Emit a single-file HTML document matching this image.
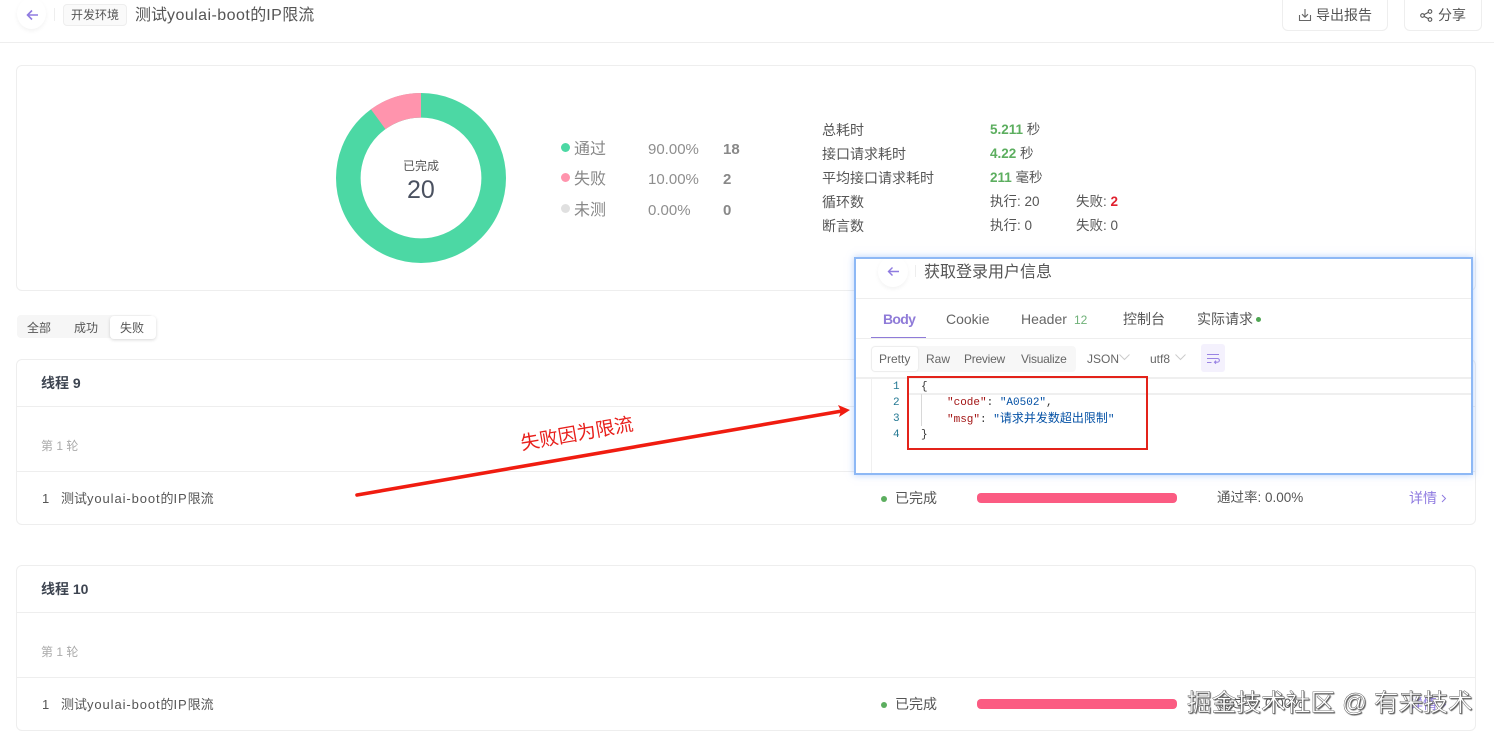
<!DOCTYPE html>
<html lang="zh"><head><meta charset="utf-8"><title>测试报告</title>
<style>
html,body{margin:0;padding:0;background:#fff}
body{position:relative;width:1494px;height:739px;overflow:hidden;font-family:"Liberation Sans","Noto Sans CJK SC",sans-serif;font-size:13px;color:#555}
.t{position:absolute;white-space:nowrap;line-height:20px}
.b{position:absolute;box-sizing:border-box}
.card{position:absolute;box-sizing:border-box;left:16px;width:1460px;background:#fff;border:1px solid #eeeeee;border-radius:6px}
.hl{position:absolute;height:1px;background:#eeeeee}
.m{font-family:"Liberation Mono","Noto Sans CJK SC",monospace;font-size:11px}
.m i{font-style:normal;font-size:12px}
.l{letter-spacing:.9px}
.l2{letter-spacing:.45px}
svg{position:absolute;overflow:visible}
</style></head><body>

<!-- header -->
<div class="b" style="left:17px;top:-2px;width:29px;height:31px;border-radius:50%;background:#fff;box-shadow:0 2px 4px rgba(0,0,0,.05)"></div>
<svg style="left:26px;top:9px" width="13" height="12" viewBox="0 0 13 12" fill="none" stroke="#8f7be0" stroke-width="1.6"><path d="M12 6H1.5M6 1.5L1.5 6L6 10.5"/></svg>
<div class="hl" style="left:54px;top:8px;width:1px;height:13px;background:#eee"></div>
<div class="b" style="left:63px;top:4px;width:64px;height:22px;border:1px solid #eee;border-radius:4px;background:#fafafa"></div>
<div class="t" style="left:71px;top:5px;font-size:12px;color:#555">开发环境</div>
<div class="t" style="left:135px;top:6px;font-size:16px;color:#555">测试<span class="l2">youlai-boot</span>的<span class="l2">IP</span>限流</div>
<div class="b" style="left:1282px;top:-6px;width:106px;height:37px;border:1px solid #eee;border-radius:6px"></div>
<svg style="left:1298px;top:8px" width="14" height="14" viewBox="0 0 14 14" fill="none" stroke="#666" stroke-width="1.1"><path d="M7 1V9M4 6.2L7 9.2L10 6.2M1.5 7V12.5H12.5V7"/></svg>
<div class="t" style="left:1316px;top:5px;font-size:14px;color:#555">导出报告</div>
<div class="b" style="left:1404px;top:-6px;width:78px;height:37px;border:1px solid #eee;border-radius:6px"></div>
<svg style="left:1420px;top:9px" width="13" height="13" viewBox="0 0 13 13" fill="none" stroke="#555" stroke-width="1.1"><circle cx="2.5" cy="6.5" r="1.8"/><circle cx="10" cy="2.5" r="1.8"/><circle cx="10" cy="10.5" r="1.8"/><path d="M4 5.6L8.4 3.4M4 7.4L8.4 9.6"/></svg>
<div class="t" style="left:1438px;top:5px;font-size:14px;color:#555">分享</div>
<div class="hl" style="left:0;top:42px;width:1494px"></div>

<!-- summary card -->
<div class="card" style="top:65px;height:226px"></div>
<svg style="left:336px;top:93px" width="170" height="170" viewBox="0 0 170 170">
<circle cx="85" cy="85" r="72.7" fill="none" stroke="#4cd8a4" stroke-width="24.6"/>
<path d="M85 0A85 85 0 0 0 34.9 16.3L49.5 36.2A60.4 60.4 0 0 1 85 24.6Z" fill="#ff94ad"/>
</svg>
<div class="t" style="left:403px;top:156px;font-size:12px;color:#555">已完成</div>
<div class="t" style="left:407px;top:179px;font-size:25px;line-height:22px;color:#4a5160">20</div>

<div class="b" style="left:561px;top:143px;width:9px;height:9px;border-radius:50%;background:#4cd8a4"></div>
<div class="t" style="left:574px;top:140px;font-size:16px;color:#888">通过</div>
<div class="t" style="left:648px;top:140px;font-size:15px;color:#8e8e8e">90.00%</div>
<div class="t" style="left:723px;top:140px;font-size:15px;font-weight:bold;color:#888">18</div>
<div class="b" style="left:561px;top:173px;width:9px;height:9px;border-radius:50%;background:#ff94ad"></div>
<div class="t" style="left:574px;top:170px;font-size:16px;color:#888">失败</div>
<div class="t" style="left:648px;top:170px;font-size:15px;color:#8e8e8e">10.00%</div>
<div class="t" style="left:723px;top:170px;font-size:15px;font-weight:bold;color:#888">2</div>
<div class="b" style="left:561px;top:204px;width:9px;height:9px;border-radius:50%;background:#e0e0e0"></div>
<div class="t" style="left:574px;top:201px;font-size:16px;color:#888">未测</div>
<div class="t" style="left:648px;top:201px;font-size:15px;color:#8e8e8e">0.00%</div>
<div class="t" style="left:723px;top:201px;font-size:15px;font-weight:bold;color:#888">0</div>

<div class="t" style="left:822px;top:120px;font-size:14px">总耗时</div>
<div class="t" style="left:990px;top:120px;font-size:13.5px"><b style="color:#5cae5f">5.211</b> 秒</div>
<div class="t" style="left:822px;top:144px;font-size:14px">接口请求耗时</div>
<div class="t" style="left:990px;top:144px;font-size:13.5px"><b style="color:#5cae5f">4.22</b> 秒</div>
<div class="t" style="left:822px;top:168px;font-size:14px">平均接口请求耗时</div>
<div class="t" style="left:990px;top:168px;font-size:13.5px"><b style="color:#5cae5f">211</b> 毫秒</div>
<div class="t" style="left:822px;top:192px;font-size:14px">循环数</div>
<div class="t" style="left:990px;top:192px;font-size:13.5px">执行: 20</div>
<div class="t" style="left:1076px;top:192px;font-size:13.5px">失败: <b style="color:#e0212f">2</b></div>
<div class="t" style="left:822px;top:216px;font-size:14px">断言数</div>
<div class="t" style="left:990px;top:216px;font-size:13.5px">执行: 0</div>
<div class="t" style="left:1076px;top:216px;font-size:13.5px">失败: 0</div>

<!-- filter tabs -->
<div class="b" style="left:17px;top:315px;width:136px;height:23px;background:#f6f6f6;border-radius:4px"></div>
<div class="b" style="left:110px;top:316px;width:46px;height:23px;background:#fff;border-radius:4px;box-shadow:0 1px 3px rgba(0,0,0,.16)"></div>
<div class="t" style="left:27px;top:318px;font-size:12px">全部</div>
<div class="t" style="left:74px;top:318px;font-size:12px">成功</div>
<div class="t" style="left:120px;top:318px;font-size:12px">失败</div>

<!-- thread 9 -->
<div class="card" style="top:359px;height:166px"></div>
<div class="t" style="left:41px;top:373px;font-size:14px;font-weight:bold;color:#3d4450">线程 9</div>
<div class="hl" style="left:17px;top:406px;width:1458px"></div>
<div class="t" style="left:41px;top:436px;font-size:12px;color:#aaa">第 1 轮</div>
<div class="hl" style="left:17px;top:471px;width:1458px"></div>
<div class="t" style="left:42px;top:489px">1</div>
<div class="t" style="left:61px;top:489px">测试<span class="l">youlai-boot</span>的<span class="l">IP</span>限流</div>
<div class="b" style="left:881px;top:496px;width:6px;height:6px;border-radius:50%;background:#5cae5f"></div>
<div class="t" style="left:895px;top:488px;font-size:14px">已完成</div>
<div class="b" style="left:977px;top:493px;width:200px;height:10px;border-radius:4px;background:#fb5b82"></div>
<div class="t" style="left:1217px;top:488px;font-size:13.5px">通过率: 0.00%</div>
<div class="t" style="left:1409px;top:488px;font-size:14px;color:#8f7be0">详情</div>
<svg style="left:1441px;top:494px" width="6" height="9" viewBox="0 0 6 9" fill="none" stroke="#8f7be0" stroke-width="1"><path d="M1 1L4.5 4.5L1 8"/></svg>

<!-- thread 10 -->
<div class="card" style="top:565px;height:166px"></div>
<div class="t" style="left:41px;top:579px;font-size:14px;font-weight:bold;color:#3d4450">线程 10</div>
<div class="hl" style="left:17px;top:612px;width:1458px"></div>
<div class="t" style="left:41px;top:642px;font-size:12px;color:#aaa">第 1 轮</div>
<div class="hl" style="left:17px;top:677px;width:1458px"></div>
<div class="t" style="left:42px;top:695px">1</div>
<div class="t" style="left:61px;top:695px">测试<span class="l">youlai-boot</span>的<span class="l">IP</span>限流</div>
<div class="b" style="left:881px;top:702px;width:6px;height:6px;border-radius:50%;background:#5cae5f"></div>
<div class="t" style="left:895px;top:694px;font-size:14px">已完成</div>
<div class="b" style="left:977px;top:699px;width:200px;height:10px;border-radius:4px;background:#fb5b82"></div>
<div class="t" style="left:1217px;top:694px;font-size:13.5px">通过率: 0.00%</div>
<div class="t" style="left:1409px;top:694px;font-size:14px;color:#8f7be0">详情</div>
<svg style="left:1441px;top:700px" width="6" height="9" viewBox="0 0 6 9" fill="none" stroke="#8f7be0" stroke-width="1"><path d="M1 1L4.5 4.5L1 8"/></svg>

<!-- arrow annotation -->
<svg style="left:340px;top:400px" width="520" height="110" viewBox="0 0 520 110">
<path d="M17 95L502 11" fill="none" stroke="#f01c10" stroke-width="3.6" stroke-linecap="round"/>
<path d="M510 10L498 5L501 11L499 17Z" fill="#f01c10"/>
</svg>
<div class="t" style="left:521px;top:434px;font-size:19px;color:#e8201c;transform:rotate(-10deg);transform-origin:left center;line-height:22px">失败因为限流</div>

<!-- overlay panel -->
<div class="b" style="left:854px;top:257px;width:619px;height:218px;background:#fff;border:2px solid #8db8f5;box-shadow:0 0 7px rgba(120,170,250,.55)"></div>
<div class="b" style="left:878px;top:256px;width:30px;height:31px;border-radius:50%;background:#fff;box-shadow:0 2px 4px rgba(0,0,0,.05);clip-path:inset(3px -6px -6px -6px)"></div>
<svg style="left:887px;top:266px" width="13" height="11" viewBox="0 0 13 11" fill="none" stroke="#8f7be0" stroke-width="1.4"><path d="M12 5.5H1.5M5.5 1.5L1.5 5.5L5.5 9.5"/></svg>
<div class="hl" style="left:915px;top:265px;width:1px;height:12px"></div>
<div class="t" style="left:924px;top:262px;font-size:16px;line-height:21px;color:#555">获取登录用户信息</div>
<div class="hl" style="left:856px;top:298px;width:615px"></div>

<div class="t" style="left:883px;top:309px;font-size:14px;font-weight:bold;letter-spacing:-.7px;color:#8f7bd8">Body</div>
<div class="b" style="left:871px;top:337px;width:55px;height:2px;background:#8f7bd8"></div>
<div class="t" style="left:946px;top:309px;font-size:14px;color:#666">Cookie</div>
<div class="t" style="left:1021px;top:309px;font-size:14px;color:#666">Header</div>
<div class="t" style="left:1074px;top:310px;font-size:12px;color:#6fb178">12</div>
<div class="t" style="left:1123px;top:309px;font-size:14px;color:#555">控制台</div>
<div class="t" style="left:1197px;top:309px;font-size:14px;color:#555">实际请求</div>
<div class="b" style="left:1256px;top:317px;width:5px;height:5px;border-radius:50%;background:#4fa653"></div>
<div class="hl" style="left:856px;top:338px;width:615px"></div>

<div class="b" style="left:871px;top:346px;width:205px;height:26px;background:#f7f7f7;border-radius:4px"></div>
<div class="b" style="left:872px;top:347px;width:46px;height:24px;background:#fff;border-radius:3px;box-shadow:0 0 2px rgba(0,0,0,.12)"></div>
<div class="t" style="left:879px;top:349px;font-size:12px;color:#666">Pretty</div>
<div class="t" style="left:926px;top:349px;font-size:12px;color:#666">Raw</div>
<div class="t" style="left:964px;top:349px;font-size:12px;letter-spacing:-.25px;color:#666">Preview</div>
<div class="t" style="left:1021px;top:349px;font-size:12px;letter-spacing:-.25px;color:#666">Visualize</div>
<div class="t" style="left:1087px;top:349px;font-size:12px;color:#666">JSON</div>
<svg style="left:1119px;top:354px" width="11" height="6" viewBox="0 0 11 6" fill="none" stroke="#ccc"><path d="M.5 .5L5.5 5.5L10.5 .5"/></svg>
<div class="t" style="left:1150px;top:349px;font-size:12px;color:#666">utf8</div>
<svg style="left:1175px;top:354px" width="11" height="6" viewBox="0 0 11 6" fill="none" stroke="#ccc"><path d="M.5 .5L5.5 5.5L10.5 .5"/></svg>
<div class="b" style="left:1201px;top:344px;width:24px;height:28px;background:#f4f1fd;border-radius:3px"></div>
<svg style="left:1206px;top:353px" width="14" height="11" viewBox="0 0 14 11" fill="none" stroke="#9a84e4" stroke-width="1.1"><path d="M1 1.5H13M1 5.5H11.5A1.8 1.8 0 0 1 11.5 9.2H8.5M10 7.7L8.5 9.2L10 10.7M1 9.5H5.5"/></svg>

<div class="b" style="left:856px;top:377px;width:615px;height:2px;background:#efefef"></div>
<div class="b" style="left:908px;top:393px;width:563px;height:2px;background:#efefef"></div>
<div class="hl" style="left:871px;top:379px;width:1px;height:94px;background:#f0f0f0"></div>
<div class="hl" style="left:921px;top:394px;width:1px;height:32px;background:#d8d8d8"></div>
<div class="t m" style="left:893px;top:379px;line-height:16px;color:#237893">1</div>
<div class="t m" style="left:893px;top:395px;line-height:16px;color:#237893">2</div>
<div class="t m" style="left:893px;top:411px;line-height:16px;color:#237893">3</div>
<div class="t m" style="left:893px;top:427px;line-height:16px;color:#237893">4</div>
<div class="t m" style="left:921px;top:379px;line-height:16px;color:#333">{</div>
<div class="t m" style="left:947px;top:395px;line-height:16px;color:#333"><span style="color:#a31515">"code"</span>: <span style="color:#0451a5">"A0502"</span>,</div>
<div class="t m" style="left:947px;top:411px;line-height:16px;color:#333"><span style="color:#a31515">"msg"</span>: <span style="color:#0451a5">"<i>请求并发数超出限制</i>"</span></div>
<div class="t m" style="left:921px;top:427px;line-height:16px;color:#333">}</div>
<div class="b" style="left:907px;top:376px;width:241px;height:74px;border:2px solid #e3231a"></div>

<!-- watermark -->
<div class="t" style="left:1187px;top:690px;font-size:24.7px;line-height:28px;color:#fff;-webkit-text-stroke:.4px #555;text-shadow:1px 1px 1px #555">掘金技术社区 @ 有来技术</div>
</body></html>
